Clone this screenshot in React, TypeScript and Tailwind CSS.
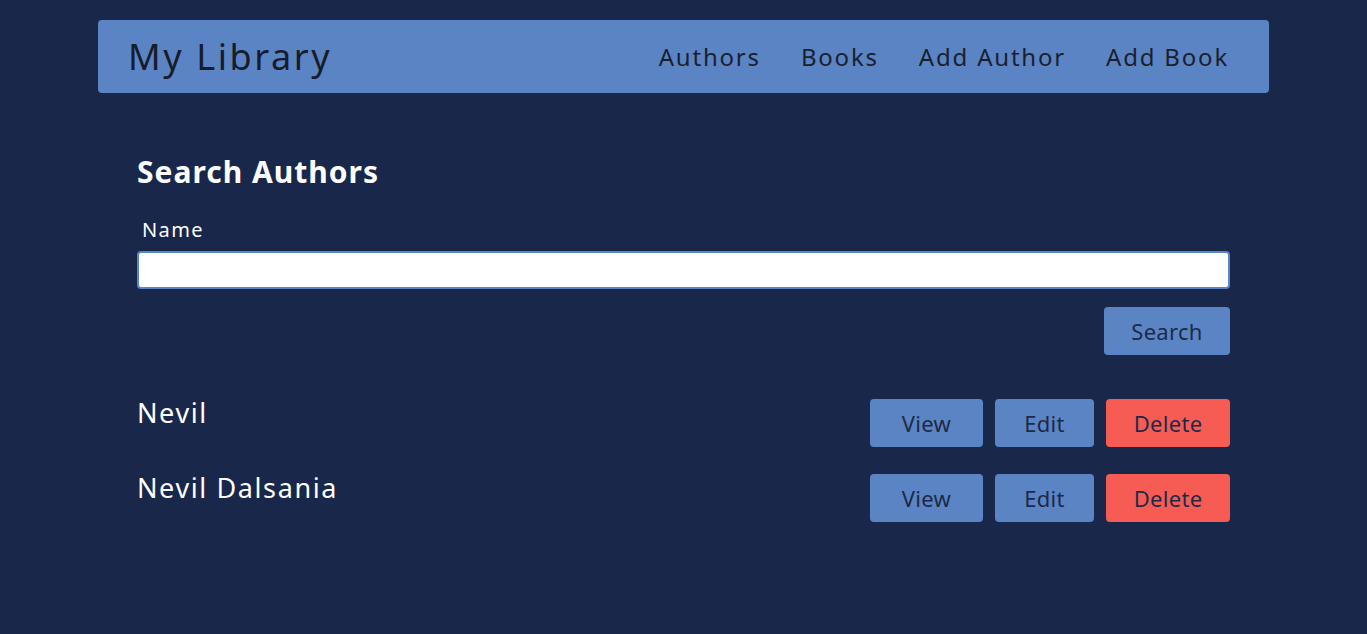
import React from 'react'

const authors = ['Nevil', 'Nevil Dalsania']

function NavLink({ label }: { label: string }) {
  return <a className="text-[24px] text-[#1a1f2e] tracking-[1.8px]">{label}</a>
}

export default function App() {
  return (
    <div
      className="min-h-[634px] bg-[#19284a] pt-5"
      style={{ fontFamily: '"Noto Sans", sans-serif' }}
    >
      {/* navbar */}
      <nav className="mx-auto flex h-[73px] w-[1171px] items-center justify-between rounded-[4px] bg-[#5b84c5] pl-[30px] pr-[40px]">
        <span className="text-[36px] tracking-[2.6px] text-[#171c2b]">My Library</span>
        <div className="flex items-center gap-[40px]">
          <NavLink label="Authors" />
          <NavLink label="Books" />
          <NavLink label="Add Author" />
          <NavLink label="Add Book" />
        </div>
      </nav>

      {/* content */}
      <main className="mx-auto w-[1093px] pt-[57px]">
        <h2 className="text-[30px] font-bold leading-[44px] tracking-[1px] text-white">Search Authors</h2>
        <form className="mt-[22px]" onSubmit={(e) => e.preventDefault()}>
          <label className="ml-[5px] block text-[20px] leading-[28px] tracking-[1.4px] text-white">Name</label>
          <input
            type="text"
            className="mt-[7px] block h-[38px] w-full rounded-[4px] border-2 border-[#5b84c5] bg-white px-2 outline-none"
          />
          <div className="mt-[18px] flex justify-end">
            <button className="h-[48px] w-[126px] rounded-[4px] bg-[#5b84c5] text-[22px] tracking-[0.3px] text-[#1b2a48]">
              Search
            </button>
          </div>
        </form>

        <ul className="mt-[44px] flex flex-col gap-[27px]">
          {authors.map((name) => (
            <li key={name} className="flex items-start justify-between">
              <span className="text-[27px] leading-[28px] tracking-[1.6px] text-white">{name}</span>
              <div className="flex gap-[12px]">
                <button className="h-[48px] w-[113px] rounded-[4px] bg-[#5b84c5] text-[22px] tracking-[0.3px] text-[#1b2a48]">
                  View
                </button>
                <button className="h-[48px] w-[99px] rounded-[4px] bg-[#5b84c5] text-[22px] tracking-[0.3px] text-[#1b2a48]">
                  Edit
                </button>
                <button className="h-[48px] w-[124px] rounded-[4px] bg-[#f65c54] text-[22px] tracking-[0.3px] text-[#1b2a48]">
                  Delete
                </button>
              </div>
            </li>
          ))}
        </ul>
      </main>
    </div>
  )
}
